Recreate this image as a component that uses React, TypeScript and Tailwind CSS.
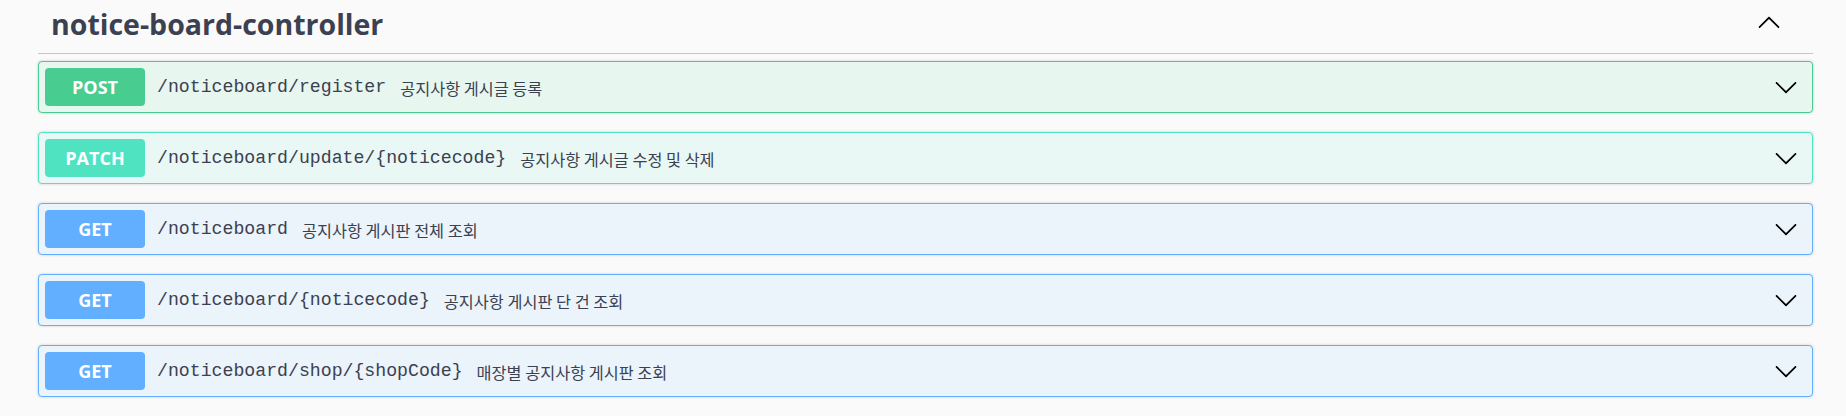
import React from 'react';

type Method = 'POST' | 'PATCH' | 'GET';

interface Endpoint {
    method: Method;
    path: string;
    summary: string;
}

const endpoints: Endpoint[] = [
    { method: 'POST', path: '/noticeboard/register', summary: '공지사항 게시글 등록' },
    { method: 'PATCH', path: '/noticeboard/update/{noticecode}', summary: '공지사항 게시글 수정 및 삭제' },
    { method: 'GET', path: '/noticeboard', summary: '공지사항 게시판 전체 조회' },
    { method: 'GET', path: '/noticeboard/{noticecode}', summary: '공지사항 게시판 단 건 조회' },
    { method: 'GET', path: '/noticeboard/shop/{shopCode}', summary: '매장별 공지사항 게시판 조회' },
];

// block colours per http method
const styles: Record<Method, { block: string; badge: string }> = {
    POST: { block: 'bg-[#e8f6f0] border-[#49cc90]', badge: 'bg-[#49cc90]' },
    PATCH: { block: 'bg-[#e9f8f5] border-[#50e3c2]', badge: 'bg-[#50e3c2]' },
    GET: { block: 'bg-[#ebf3fb] border-[#61affe]', badge: 'bg-[#61affe]' },
};

function Arrow({ up = false }: { up?: boolean }) {
    return (
        <svg
            width="24"
            height="24"
            viewBox="0 0 20 20"
            className={up ? 'rotate-180' : ''}
            aria-hidden="true"
        >
            <path
                fill="#000"
                d="M17.418 6.109c.272-.268.709-.268.979 0s.271.701 0 .969l-7.908 7.83c-.27.268-.707.268-.979 0l-7.908-7.83c-.27-.268-.27-.701 0-.969.271-.268.709-.268.979 0L10 13.25l7.418-7.141z"
            />
        </svg>
    );
}

function OpBlock({ method, path, summary }: Endpoint) {
    const s = styles[method];
    return (
        <div className={`border rounded-[4px] shadow-[0_0_3px_rgba(0,0,0,0.19)] ${s.block}`}>
            <div className="flex items-center px-[6px] h-[50px]">
                <span
                    className={`${s.badge} w-[100px] h-[38px] rounded-[4px] flex items-center justify-center text-white font-bold text-[18px] [font-family:'Open_Sans',sans-serif]`}
                >
                    {method}
                </span>
                <span className="ml-[12px] pt-[2px] text-[18.2px] text-[#3b4151] [font-family:'Liberation_Mono',monospace]">
                    {path}
                </span>
                <span className="ml-[14px] pt-[3px] text-[16.3px] text-[#3b4151] [font-family:'Noto_Sans_CJK_KR',sans-serif]">
                    {summary}
                </span>
                <div className="ml-auto mr-[8px] flex items-center">
                    <Arrow />
                </div>
            </div>
        </div>
    );
}

export default function App() {
    return (
        <div className="min-h-screen bg-[#fafafa] pl-[38px] pr-[33px] pb-[18px]">
            {/* controller header */}
            <div className="flex items-center justify-between h-[54px] border-b border-[#c4c6cb]">
                <h3 className="pl-[13px] pb-[4px] text-[28.5px] font-bold text-[#3b4151] [font-family:'Open_Sans',sans-serif]">
                    notice-board-controller
                </h3>
                <div className="mr-[32px] pb-[8px]">
                    <Arrow up />
                </div>
            </div>

            <div className="mt-[7px] flex flex-col gap-[19px]">
                {endpoints.map((e) => (
                    <OpBlock key={e.method + e.path} {...e} />
                ))}
            </div>
        </div>
    );
}
